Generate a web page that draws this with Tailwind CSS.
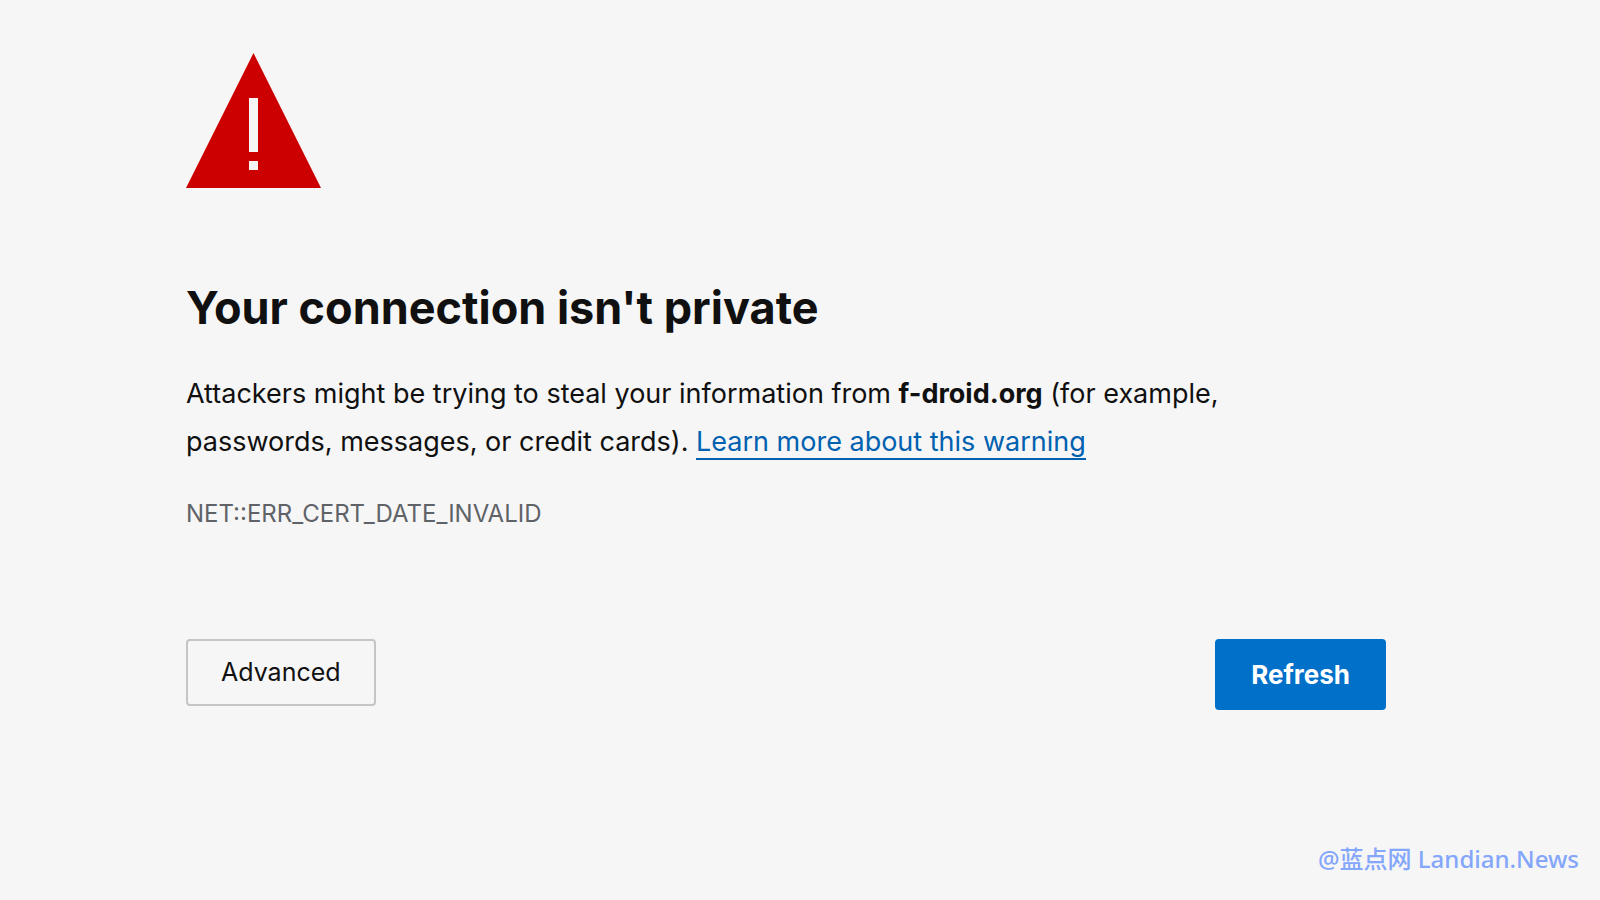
<!DOCTYPE html>
<html lang="en">
<head>
<meta charset="utf-8">
<title>Privacy error</title>
<script src="https://cdn.jsdelivr.net/npm/@tailwindcss/browser@4"></script>
</head>
<body class="min-h-screen bg-[#f6f6f6] font-['Inter','Noto_Sans_CJK_SC',sans-serif] text-[#101010] flex flex-col">
<main class="w-full max-w-[1386px] pl-[186px] pt-[53px]">
<svg class="block w-[135px] h-[135px]" viewBox="0 0 135 135" aria-hidden="true"><path fill="#cc0000" d="M67.500 0 135 135H0Z"/><path fill="#f6f6f6" d="M63 45h9v54h-9zM63 108h9v9h-9z"/></svg>
<h1 class="mt-[88px] text-[45px] leading-[64px] font-bold">Your connection isn't private</h1>
<p class="mt-[30px] text-[27px] leading-[48px]">Attackers might be trying to steal your information from <strong class="font-bold">f-droid.org</strong> (for example,<br>passwords, messages, or credit cards). <a href="#" class="text-[#0061b0] border-b-2 border-[#0061b0]">Learn more about this warning</a></p>
<p class="mt-[26px] text-[24px] leading-[44px] text-[#5f6368]">NET::ERR_CERT_DATE_INVALID</p>
<div class="mt-[103px] flex justify-between items-start">
<button class="h-[67px] px-[33px] border-2 border-[#c5c5c5] rounded-[4px] text-[25px]">Advanced</button>
<button class="h-[71px] px-[36px] bg-[#0070c9] text-white rounded-[4px] text-[26px] font-bold">Refresh</button>
</div>
</main>
<footer class="mt-auto pb-[23px] pr-[21px] text-right text-[24px] leading-[36px] font-medium text-[#84a6fb] font-['Noto_Sans','Noto_Sans_CJK_SC',sans-serif]">@蓝点网 Landian.News</footer>
</body>
</html>
